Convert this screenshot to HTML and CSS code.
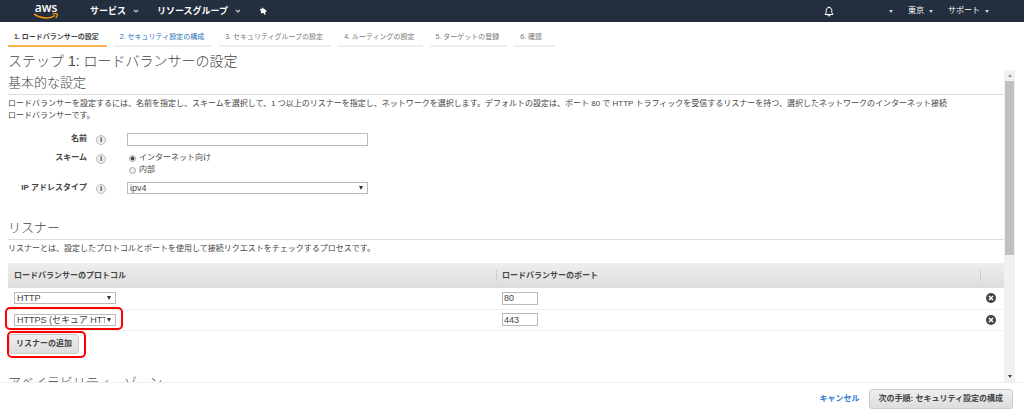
FILE: index.html
```html
<!DOCTYPE html>
<html lang="ja">
<head>
    <meta charset="UTF-8">
    <meta name="viewport" content="width=device-width, initial-scale=1.0">
    <title>ロードバランサーの設定</title>
    <link rel="stylesheet" href="styles.css">
</head>
<body>

    <header class="topbar">
        <a class="logo" href="#" aria-label="aws">
            <span class="logo-text">aws</span>
            <svg class="logo-smile" viewBox="0 0 26 6">
                <path d="M1 1c7 5 16 5 21 1.500" fill="none" stroke="#f90" stroke-width="1.500"/>
                <path d="M19.500 1c2-.8 4-.6 4.500 0s0 2.600-1.300 4" fill="none" stroke="#f90" stroke-width="1.200"/>
            </svg>
        </a>
        <nav class="main-nav">
            <button type="button">サービス
                <svg class="chevron" viewBox="0 0 6 4"><path d="M1 1l2 2 2-2" fill="none" stroke="#ccc" stroke-width="1.200"/></svg>
            </button>
            <button type="button">リソースグループ
                <svg class="chevron" viewBox="0 0 6 4"><path d="M1 1l2 2 2-2" fill="none" stroke="#ccc" stroke-width="1.200"/></svg>
            </button>
            <button type="button" aria-label="ピン留め">
                <svg class="pin" viewBox="0 0 8 8"><path d="M3.200.2L4.800 1.700 6.600 2.800 7.800 4.400 6.100 4.900 6.600 7.400 5.700 7.800 4.300 5.800 2.600 6.600 1.700 5.600 2.300 3.900.8 3 1.600 1.800 2.800 1.900z" fill="#fff"/></svg>
            </button>
        </nav>
        <nav class="user-nav">
            <button type="button" aria-label="通知">
                <svg class="bell" viewBox="0 0 10 11"><path d="M5 .5v1M1 8.500h8L7.800 6.800V4.300C7.800 2.600 6.700 1.500 5 1.500S2.200 2.600 2.200 4.300v2.500zM4 9c0 1.600 2 1.600 2 0" fill="none" stroke="#fff"/></svg>
            </button>
            <button type="button" class="account" aria-label="アカウント"><span class="caret"></span></button>
            <button type="button">東京<span class="caret"></span></button>
            <button type="button">サポート<span class="caret"></span></button>
        </nav>
    </header>

    <nav class="steps">
        <a class="step current" href="#">1. ロードバランサーの設定</a>
        <a class="step next" href="#">2. セキュリティ設定の構成</a>
        <a class="step" href="#">3. セキュリティグループの設定</a>
        <a class="step" href="#">4. ルーティングの設定</a>
        <a class="step" href="#">5. ターゲットの登録</a>
        <a class="step last" href="#">6. 確認</a>
    </nav>

    <h1>ステップ 1: ロードバランサーの設定</h1>

    <div class="wizard">
        <main class="content">
            <section class="basic">
                <h2>基本的な設定</h2>
                <p>ロードバランサーを設定するには、名前を指定し、スキームを選択して、1 つ以上のリスナーを指定し、ネットワークを選択します。デフォルトの設定は、ポート 80 で HTTP トラフィックを受信するリスナーを持つ、選択したネットワークのインターネット接続<span class="nowrap">ロードバランサーです。</span></p>

                <form class="settings">
                    <label for="name">名前</label>
                    <span class="info">i</span>
                    <input class="field" type="text" id="name">

                    <span class="label" id="scheme">スキーム</span>
                    <span class="info">i</span>
                    <div class="radios" role="radiogroup" aria-labelledby="scheme">
                        <label><input type="radio" name="scheme" checked>インターネット向け</label>
                        <label><input type="radio" name="scheme">内部</label>
                    </div>

                    <label for="iptype">IP アドレスタイプ</label>
                    <span class="info">i</span>
                    <select class="field" id="iptype">
                        <option>ipv4</option>
                    </select>
                </form>
            </section>

            <section>
                <h2>リスナー</h2>
                <p>リスナーとは、設定したプロトコルとポートを使用して接続リクエストをチェックするプロセスです。</p>

                <table class="listeners">
                    <thead>
                        <tr>
                            <th class="col-protocol">ロードバランサーのプロトコル</th>
                            <th>ロードバランサーのポート</th>
                            <th class="col-remove"></th>
                        </tr>
                    </thead>
                    <tbody>
                        <tr>
                            <td>
                                <select aria-label="プロトコル"><option>HTTP</option></select>
                            </td>
                            <td><input type="text" value="80" aria-label="ポート"></td>
                            <td>
                                <button type="button" class="remove" aria-label="削除">
                                    <svg viewBox="0 0 10 10"><circle cx="5" cy="5" r="5" fill="#444"/><path d="M3 3l4 4M7 3l-4 4" stroke="#fff" stroke-width="1.500"/></svg>
                                </button>
                            </td>
                        </tr>
                        <tr>
                            <td>
                                <span class="marked mark-select">
                                    <select aria-label="プロトコル"><option>HTTPS (セキュア HTTP)</option></select>
                                </span>
                            </td>
                            <td><input type="text" value="443" aria-label="ポート"></td>
                            <td>
                                <button type="button" class="remove" aria-label="削除">
                                    <svg viewBox="0 0 10 10"><circle cx="5" cy="5" r="5" fill="#444"/><path d="M3 3l4 4M7 3l-4 4" stroke="#fff" stroke-width="1.500"/></svg>
                                </button>
                            </td>
                        </tr>
                    </tbody>
                </table>

                <span class="marked mark-button">
                    <button type="button" class="btn">リスナーの追加</button>
                </span>
            </section>

            <section class="zones">
                <h2>アベイラビリティーゾーン</h2>
            </section>
        </main>

        <div class="scrollbar">
            <span class="arrow up"></span>
            <div class="track"><div class="thumb"></div></div>
            <span class="arrow down"></span>
        </div>
    </div>

    <footer class="actions">
        <a href="#">キャンセル</a>
        <button type="button" class="btn">次の手順: セキュリティ設定の構成</button>
    </footer>

</body>
</html>
```
FILE: styles.css
```css
* {
    margin: 0;
    padding: 0;
    box-sizing: border-box;
}

body {
    display: flex;
    flex-direction: column;
    height: 100vh;
    overflow: hidden;
    background: #fff;
    color: #444;
    font-family: "Liberation Sans", "Noto Sans CJK JP", sans-serif;
    font-size: 8px;
    line-height: 12px;
}

button, input, select {
    font: inherit;
    color: inherit;
}

a {
    text-decoration: none;
}

svg {
    display: block;
}

/* top bar */
.topbar {
    display: flex;
    align-items: center;
    flex: none;
    height: 22px;
    padding: 0 35px 0 33px;
    background: #232f3e;
    color: #fff;
}

.logo {
    display: block;
    width: 26px;
    color: #fff;
}

.logo-text {
    display: block;
    font-family: "Open Sans", sans-serif;
    font-size: 12px;
    font-weight: 600;
    line-height: 10px;
    text-align: center;
}

.logo-smile {
    width: 26px;
    height: 6px;
}

.topbar button {
    display: flex;
    align-items: center;
    border: none;
    background: none;
}

.main-nav {
    display: flex;
    gap: 18px;
    margin-left: 31px;
    font-size: 9px;
    font-weight: bold;
}

.main-nav button {
    gap: 7px;
}

.chevron {
    width: 6px;
    height: 4px;
}

.pin {
    width: 8px;
    height: 8px;
}

.user-nav {
    display: flex;
    align-items: center;
    gap: 15px;
    margin-left: auto;
}

.user-nav button {
    gap: 5px;
}

.user-nav .account {
    margin-left: 40px;
}

.bell {
    width: 10px;
    height: 11px;
}

.caret {
    border: 2px solid transparent;
    border-top: 3px solid #ccc;
    border-bottom: none;
}

/* wizard steps */
.steps {
    display: flex;
    flex: none;
    gap: 7px;
    padding: 8px 8px 0;
    font-size: 7px;
    line-height: 14px;
}

.step {
    padding: 0 8px 1px 6px;
    border-bottom: 2px solid #eee;
    color: #777;
}

.step.current {
    border-color: #fbb450;
    color: #444;
    font-weight: bold;
}

.step.next {
    color: #1e70b8;
}

.step.last {
    padding-right: 13px;
}

h1 {
    flex: none;
    padding: 6px 8px 0;
    font-size: 14px;
    font-weight: 300;
    line-height: 17px;
}

/* scrolling area */
.wizard {
    display: flex;
    flex: 1;
    min-height: 0;
    padding-right: 9px;
    border-bottom: 1px solid #eee;
}

.content {
    flex: 1;
    min-width: 0;
    padding-left: 8px;
    overflow: hidden;
}

h2 {
    padding: 4px 0 2px;
    border-bottom: 1px solid #ddd;
    font-size: 13px;
    font-weight: 300;
    line-height: 18px;
}

p {
    padding: 3px 0;
}

.nowrap {
    display: inline-block;
}

.basic {
    padding-bottom: 21px;
}

.settings {
    display: grid;
    grid-template-columns: 79px 10px 253px;
    align-items: start;
    gap: 6px 9px;
    padding-top: 8px;
}

.settings > label, .settings > .label {
    font-weight: bold;
    text-align: right;
}

.info {
    width: 10px;
    height: 10px;
    margin-top: 2px;
    border: 1px solid #bbb;
    border-radius: 50%;
    background: #eee;
    font-weight: bold;
    line-height: 8px;
    text-align: center;
}

.field {
    margin-left: 12px;
}

input[type="text"] {
    height: 13px;
    padding: 0 1px;
    border: 1px solid #bbb;
    background: #fff;
    font-size: 9px;
}

input.field, select.field {
    width: 241px;
}

select {
    appearance: none;
    display: block;
    width: 102px;
    height: 12px;
    padding: 0 10px 0 2px;
    border: 1px solid #bbb;
    background: #fff url("data:image/svg+xml,%3Csvg xmlns='http://www.w3.org/2000/svg' viewBox='0 0 4 4'%3E%3Cpath d='M0 0h4L2 4z' fill='%23333'/%3E%3C/svg%3E") no-repeat right 4px center / 4px 4px;
    font-size: 9px;
    line-height: 10px;
}

.radios {
    display: flex;
    flex-direction: column;
    margin-left: 14px;
}

.radios label {
    display: flex;
    align-items: center;
    gap: 3px;
}

.radios input {
    appearance: none;
    width: 7px;
    height: 7px;
    border: 1px solid #aaa;
    border-radius: 50%;
    background: #eee;
}

.radios input:checked {
    background: radial-gradient(#444 50%, #eee 60%);
}

/* listeners table */
.listeners {
    width: 100%;
    margin-top: 5px;
    border-collapse: collapse;
    table-layout: fixed;
}

.listeners th {
    position: relative;
    height: 25px;
    padding-left: 6px;
    text-align: left;
}

.listeners thead tr {
    background: linear-gradient(#eee, #ddd);
}

/* short divider between header cells */
.listeners th + th::before {
    content: "";
    position: absolute;
    top: 7px;
    bottom: 7px;
    left: 0;
    border-left: 1px solid #ccc;
}

.listeners td {
    height: 21px;
    padding-left: 6px;
    border-bottom: 1px solid #eee;
}

.listeners input {
    display: block;
    width: 36px;
}

.col-protocol {
    width: 49%;
}

.col-remove {
    width: 24px;
}

.remove {
    display: block;
    width: 10px;
    height: 10px;
    border: none;
    background: none;
}

/* red highlight frames */
.marked {
    display: block;
    position: relative;
    width: max-content;
}

.marked::after {
    content: "";
    position: absolute;
    border: 2px solid #f00;
    border-radius: 5px;
    pointer-events: none;
}

.mark-select::after {
    inset: -7px -7px -4px -9px;
}

.mark-button {
    margin: 3px 0 0 1px;
}

.mark-button::after {
    inset: -3px -7px -4px -2px;
}

.btn {
    display: block;
    height: 20px;
    padding: 0 6px;
    border: 1px solid #ccc;
    border-radius: 3px;
    background: linear-gradient(#eee, #ddd);
    font-weight: bold;
}

.zones {
    padding-top: 16px;
}

/* scrollbar */
.scrollbar {
    display: flex;
    flex-direction: column;
    width: 11px;
    background: #f1f1f1;
}

.arrow {
    display: flex;
    align-items: center;
    justify-content: center;
    height: 11px;
}

.arrow::before {
    content: "";
    border: 2px solid transparent;
}

.arrow.up::before {
    border-top: none;
    border-bottom: 3px solid #999;
}

.arrow.down::before {
    border-bottom: none;
    border-top: 3px solid #444;
}

.track {
    flex: 1;
    padding: 0 1px;
}

.thumb {
    height: 60%;
    background: #c1c1c1;
}

/* bottom actions */
.actions {
    display: flex;
    flex: none;
    align-items: center;
    justify-content: flex-end;
    gap: 9px;
    height: 32px;
    padding: 0 11px;
    font-weight: bold;
}

.actions a {
    color: #2a7ad2;
}

.actions .btn {
    padding: 0 9px;
}
```
